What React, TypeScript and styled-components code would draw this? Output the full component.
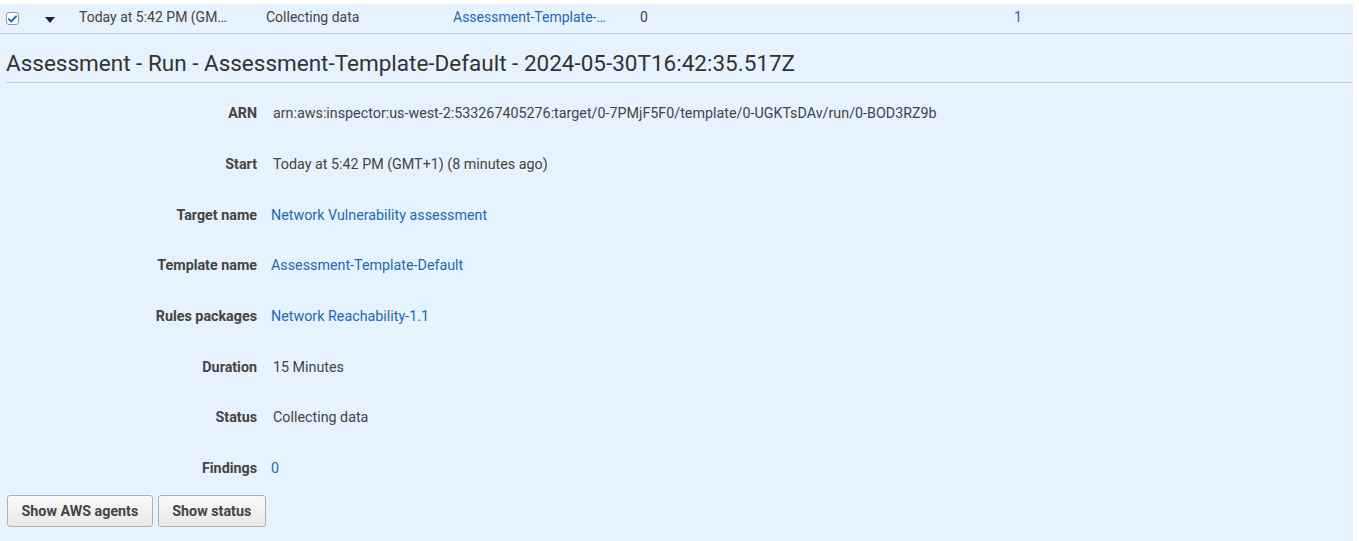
import styled, { createGlobalStyle } from 'styled-components';

const GlobalStyle = createGlobalStyle`
  body {
    margin: 0;
    background: #ffffff;
    font-family: Roboto, 'Liberation Sans', Arial, sans-serif;
  }
`;

const details: { label: string; value: string; link?: boolean }[] = [
  { label: 'ARN', value: 'arn:aws:inspector:us-west-2:533267405276:target/0-7PMjF5F0/template/0-UGKTsDAv/run/0-BOD3RZ9b' },
  { label: 'Start', value: 'Today at 5:42 PM (GMT+1) (8 minutes ago)' },
  { label: 'Target name', value: 'Network Vulnerability assessment', link: true },
  { label: 'Template name', value: 'Assessment-Template-Default', link: true },
  { label: 'Rules packages', value: 'Network Reachability-1.1', link: true },
  { label: 'Duration', value: '15 Minutes' },
  { label: 'Status', value: 'Collecting data' },
  { label: 'Findings', value: '0', link: true },
];

const App = () => {
  return (
    <>
      <GlobalStyle />
      <Page>
        <RunRow>
          <CheckCell>
            <CheckBox>
              <svg width="9" height="8" viewBox="0 0 9 8">
                <path d="M1 4.2 L3.4 6.4 L8 1.4" fill="none" stroke="#1b6ac9" strokeWidth="2" strokeLinecap="round" strokeLinejoin="round" />
              </svg>
            </CheckBox>
          </CheckCell>
          <CaretCell>
            <Caret />
          </CaretCell>
          <Cell>Today at 5:42 PM (GM…</Cell>
          <Cell>Collecting data</Cell>
          <Cell $link>Assessment-Template-…</Cell>
          <Cell>0</Cell>
          <Cell />
          <Cell $link>1</Cell>
        </RunRow>

        <Detail>
          <Title>Assessment - Run - Assessment-Template-Default - 2024-05-30T16:42:35.517Z</Title>
          <DetailList>
            {details.map(item => (
              <DetailRow key={item.label}>
                <Label>{item.label}</Label>
                <Value $link={item.link}>{item.value}</Value>
              </DetailRow>
            ))}
          </DetailList>
          <ButtonBar>
            <Button>Show AWS agents</Button>
            <Button>Show status</Button>
          </ButtonBar>
        </Detail>
      </Page>
    </>
  );
};

export default App;

const Page = styled.div`
  padding-top: 4px;
  width: 1353px;
  height: 537px;
  background: #ffffff;
`;

const RunRow = styled.div`
  display: grid;
  grid-template-columns: 39px 34px 187px 187px 187px 187px 187px 1fr;
  align-items: center;
  box-sizing: border-box;
  height: 30px;
  padding: 0 0 3px 6px;
  background: #e6f2fd;
  border-bottom: 1px solid #c4ccd4;
  font-size: 14px;
  color: #444444;
`;

const CheckCell = styled.div`
  display: flex;
  align-items: center;
  padding-top: 3px;
`;

const CheckBox = styled.span`
  display: flex;
  align-items: center;
  justify-content: center;
  width: 11px;
  height: 11px;
  border: 1px solid #8f99a4;
  border-radius: 3px;
  background: #ffffff;
`;

const CaretCell = styled.div`
  display: flex;
  align-items: center;
  padding-top: 3px;
`;

const Caret = styled.span`
  width: 0;
  height: 0;
  border-left: 5px solid transparent;
  border-right: 5px solid transparent;
  border-top: 6px solid #222222;
  margin-top: 2px;
`;

const Cell = styled.div<{ $link?: boolean }>`
  white-space: nowrap;
  overflow: hidden;
  color: ${props => (props.$link ? '#1e69b2' : '#444444')};
`;

const Detail = styled.div`
  background: #e6f2fd;
  height: 507px;
`;

const Title = styled.h2`
  margin: 0 0 0 6px;
  padding: 16px 0 6px;
  font-size: 22.5px;
  font-weight: 400;
  line-height: 26px;
  color: #333333;
  border-bottom: 1px solid #c4ccd4;
  white-space: nowrap;
`;

const DetailList = styled.div`
  padding-top: 5px;
`;

const DetailRow = styled.div`
  display: grid;
  grid-template-columns: 257px 1fr;
  column-gap: 15px;
  align-items: center;
  height: 50.7px;
  font-size: 14.3px;
`;

const Label = styled.div`
  text-align: right;
  font-weight: 700;
  color: #444444;
`;

const Value = styled.div<{ $link?: boolean }>`
  color: ${props => (props.$link ? '#1e69b2' : '#444444')};
  margin-left: ${props => (props.$link ? '-1px' : '1px')};
`;

const ButtonBar = styled.div`
  display: flex;
  gap: 5px;
  padding: 1px 0 0 7px;
`;

const Button = styled.button`
  height: 32px;
  padding: 0 13.5px;
  border: 1px solid #b0b0b0;
  border-radius: 3px;
  background: linear-gradient(#f9f9f9, #e8e8e8);
  font-family: Roboto, 'Liberation Sans', Arial, sans-serif;
  font-size: 14.3px;
  font-weight: 700;
  color: #444444;
  cursor: pointer;
`;
